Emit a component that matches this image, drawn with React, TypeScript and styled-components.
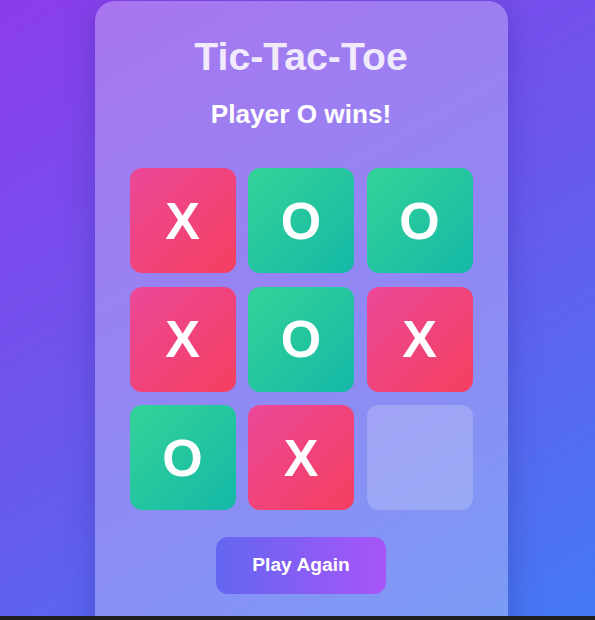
import React from "react";
import styled, { createGlobalStyle } from "styled-components";

const GlobalStyle = createGlobalStyle`
  html, body {
    margin: 0;
    padding: 0;
    background: #1f1f1f;
  }
  * { box-sizing: border-box; }
`;

const Page = styled.div`
  width: 595px;
  height: 616px;
  overflow: hidden;
  padding-top: 1px;
  display: flex;
  justify-content: center;
  align-items: flex-start;
  background: linear-gradient(150deg, #8b3dea 0%, #6a58ee 50%, #4479f3 100%);
  font-family: "Liberation Sans", Arial, sans-serif;
`;

const Card = styled.div`
  width: 413px;
  min-height: 680px;
  margin-left: 7px;
  padding: 34px 35px 40px;
  border-radius: 20px;
  background: rgba(255, 255, 255, 0.28);
  box-shadow: 0 8px 32px rgba(31, 38, 135, 0.3);
  display: flex;
  flex-direction: column;
  align-items: center;
`;

const Title = styled.h1`
  margin: 0;
  font-size: 39.2px;
  font-weight: 700;
  line-height: 44px;
  color: rgba(255, 255, 255, 0.85);
`;

const Status = styled.h2`
  margin: 21px 0 0;
  font-size: 26.2px;
  font-weight: 700;
  line-height: 29px;
  color: #ffffff;
`;

const Board = styled.div`
  margin-top: 39px;
  display: grid;
  grid-template-columns: repeat(3, 106px);
  grid-auto-rows: 105px;
  column-gap: 12.5px;
  row-gap: 13.5px;
`;

const Cell = styled.button<{ $mark: "X" | "O" | "" }>`
  border: none;
  padding: 0;
  border-radius: 12px;
  display: flex;
  align-items: center;
  justify-content: center;
  font-family: "Liberation Sans", Arial, sans-serif;
  font-size: 52px;
  font-weight: 700;
  color: #ffffff;
  cursor: pointer;
  background: ${({ $mark }) =>
    $mark === "X"
      ? "linear-gradient(135deg, #ec4899 0%, #f43f5e 100%)"
      : $mark === "O"
      ? "linear-gradient(135deg, #34d399 0%, #14b8a6 100%)"
      : "rgba(255, 255, 255, 0.2)"};
`;

const PlayAgain = styled.button`
  margin-top: 27px;
  border: none;
  padding: 17px 36px 18px;
  border-radius: 12px;
  background: linear-gradient(90deg, #6366f1 0%, #a855f7 100%);
  color: #ffffff;
  font-family: "Liberation Sans", Arial, sans-serif;
  font-size: 19.2px;
  font-weight: 700;
  line-height: 22px;
  cursor: pointer;
`;

const board: ("X" | "O" | "")[] = ["X", "O", "O", "X", "O", "X", "O", "X", ""];

export default function App() {
  return (
    <>
      <GlobalStyle />
      <Page>
        <Card>
          <Title>Tic-Tac-Toe</Title>
          <Status>Player O wins!</Status>
          <Board>
            {board.map((m, i) => (
              <Cell key={i} $mark={m}>
                {m}
              </Cell>
            ))}
          </Board>
          <PlayAgain>Play Again</PlayAgain>
        </Card>
      </Page>
    </>
  );
}
